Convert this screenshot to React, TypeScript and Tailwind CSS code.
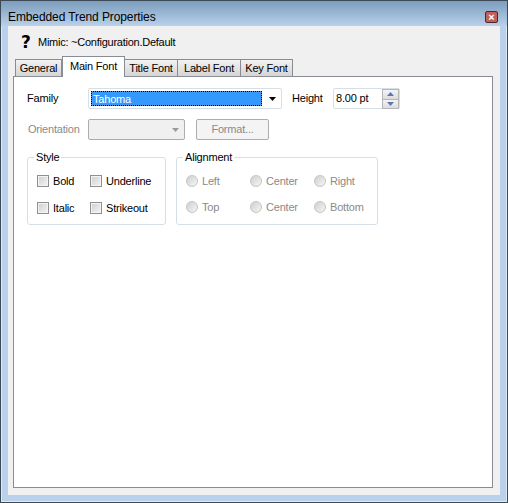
const font = "[font-family:'Liberation_Sans',Arial,sans-serif]";

const tabs = [
  { label: "General", width: "w-[47px]" },
  { label: "Main Font", width: "w-[63px]", active: true },
  { label: "Title Font", width: "w-[53px]" },
  { label: "Label Font", width: "w-[63px]" },
  { label: "Key Font", width: "w-[52px]" },
];

function Check({ label, className }: { label: string; className?: string }) {
  return (
    <div className={`flex items-center gap-[4px] ${className ?? ""}`}>
      <span className="h-[12px] w-[12px] border border-[#8e8f8f] bg-gradient-to-br from-[#cfcfcf] to-[#f4f4f4] shadow-[inset_0_0_0_1px_#f4f4f4]" />
      <span className="text-[11px] leading-[14px] tracking-[-0.2px] text-black">{label}</span>
    </div>
  );
}

function Radio({ label }: { label: string }) {
  return (
    <div className="flex items-center gap-[4px]">
      <span className="h-[12px] w-[12px] rounded-full border border-[#c4c4c4] bg-gradient-to-br from-[#cfcfcf] to-[#f6f6f6]" />
      <span className="text-[11px] leading-[14px] tracking-[-0.2px] text-[#8a8a8a]">{label}</span>
    </div>
  );
}

export default function App() {
  return (
    <div className={`h-[503px] w-[508px] overflow-hidden bg-[#b9d1ea] ${font}`}>
      <div className="flex h-full flex-col border border-[#3c4a58] shadow-[inset_0_0_0_1px_#dfeaf5]">
        {/* title bar */}
        <div className="flex h-[25px] shrink-0 items-center justify-between bg-gradient-to-b from-[#7c9dbd] to-[#b9d1ea] pl-[7px] pr-[9px] pt-[7px]">
          <span className="text-[12px] leading-[14px] tracking-[-0.1px] text-black">Embedded Trend Properties</span>
          <span className="flex h-[12px] w-[13px] items-center justify-center rounded-[2px] border border-[#4a2a2a] bg-[#c0605a] text-[11px] font-bold leading-none text-white">
            ×
          </span>
        </div>

        {/* client area */}
        <div className="mx-[7px] flex h-[469px] flex-col bg-[#f0f0f0] pb-[7px] pl-[5px] pr-[7px]">
          <div className="flex h-[29px] shrink-0 items-center pl-[8px] pt-[3px]">
            <span className="w-[17px] font-['DejaVu_Sans'] text-[17px] font-bold leading-none text-black">?</span>
            <span className="text-[11px] tracking-[-0.25px] text-black">Mimic: ~Configuration.Default</span>
          </div>

          <div className="flex h-[21px] shrink-0 items-end pl-[2px]">
            {tabs.map((t) =>
              t.active ? (
                <div
                  key={t.label}
                  className={`relative z-10 -mb-px flex h-[21px] ${t.width} items-start justify-center border border-b-0 border-[#898c95] bg-white pt-[2px] text-[11px] leading-[14px] tracking-[-0.2px] text-black`}
                >
                  {t.label}
                </div>
              ) : (
                <div
                  key={t.label}
                  className={`flex h-[17px] ${t.width} items-center justify-center border border-b-0 border-l-0 border-[#898c95] bg-gradient-to-b from-[#f2f2f2] to-[#d5d5d5] text-[11px] leading-[14px] tracking-[-0.2px] text-black first:border-l`}
                >
                  {t.label}
                </div>
              ),
            )}
          </div>

          {/* tab page */}
          <div className="flex min-h-0 flex-1 flex-col border border-[#898c95] bg-white pl-[13px] pt-[11px] tracking-[-0.2px]">
            <div className="flex h-[21px] items-center">
              <span className="w-[61px] text-[11px] text-black">Family</span>
              <div className="flex h-[21px] w-[194px] items-center rounded-[2px] border border-[#d5dfe5] p-[2px]">
                <div className="h-[15px] w-[171px] border border-dotted border-black bg-[#3399ff] pl-[1px] text-[11px] leading-[14px] text-white">
                  Tahoma
                </div>
                <svg width="7" height="4" viewBox="0 0 7 4" className="ml-[7px]">
                  <path d="M0 0h7L3.5 4z" fill="#000" />
                </svg>
              </div>
              <span className="ml-[10px] w-[41px] text-[11px] text-black">Height</span>
              <div className="flex h-[21px] w-[67px] items-center justify-between rounded-[2px] border border-[#d5dfe5] pl-[2px]">
                <span className="text-[11px] text-black">8.00 pt</span>
                <div className="flex h-[20px] w-[17px] flex-col border border-[#b5b5b5]">
                  <span className="flex h-[9px] items-center justify-center bg-gradient-to-b from-[#f4f4f4] to-[#dcdcdc]">
                    <svg width="7" height="4" viewBox="0 0 7 4"><path d="M3.5 0L7 4H0z" fill="#5a78b8" /></svg>
                  </span>
                  <span className="flex h-[9px] items-center justify-center border-t border-[#b5b5b5] bg-gradient-to-b from-[#f4f4f4] to-[#dcdcdc]">
                    <svg width="7" height="4" viewBox="0 0 7 4"><path d="M0 0h7L3.5 4z" fill="#5a78b8" /></svg>
                  </span>
                </div>
              </div>
            </div>

            <div className="mt-[10px] flex h-[21px] items-center">
              <span className="w-[61px] pl-[1px] text-[11px] text-[#8a8a8a]">Orientation</span>
              <div className="flex h-[21px] w-[97px] items-center justify-end rounded-[2px] border border-[#adadad] bg-[#f0f0f0] pr-[5px]">
                <svg width="7" height="4" viewBox="0 0 7 4"><path d="M0 0h7L3.5 4z" fill="#9a9a9a" /></svg>
              </div>
              <div className="ml-[11px] flex h-[21px] w-[73px] items-center justify-center rounded-[2px] border border-[#adadad] bg-[#f4f4f4] text-[11px] text-[#8a8a8a]">
                Format...
              </div>
            </div>

            <div className="mt-[17px] flex items-start gap-[10px]">
              <div className="relative h-[68px] w-[139px] rounded-[3px] border border-[#d5dfe5]">
                <span className="absolute left-[6px] top-[-7px] bg-white px-[2px] text-[11px] leading-[13px] text-black">Style</span>
                <div className="grid grid-cols-[53px_1fr] pl-[9px] pt-[15px]">
                  <Check label="Bold" className="mt-px" />
                  <Check label="Underline" />
                  <Check label="Italic" className="mt-[13px]" />
                  <Check label="Strikeout" className="mt-[12px]" />
                </div>
              </div>
              <div className="relative h-[68px] w-[202px] rounded-[3px] border border-[#d5dfe5]">
                <span className="absolute left-[6px] top-[-7px] bg-white px-[2px] text-[11px] leading-[13px] text-black">Alignment</span>
                <div className="grid grid-cols-[64px_64px_1fr] gap-y-[12px] pl-[9px] pt-[16px]">
                  {["Left", "Center", "Right", "Top", "Center", "Bottom"].map((label, i) => (
                    <Radio key={i} label={label} />
                  ))}
                </div>
              </div>
            </div>
          </div>
        </div>
      </div>
    </div>
  );
}
